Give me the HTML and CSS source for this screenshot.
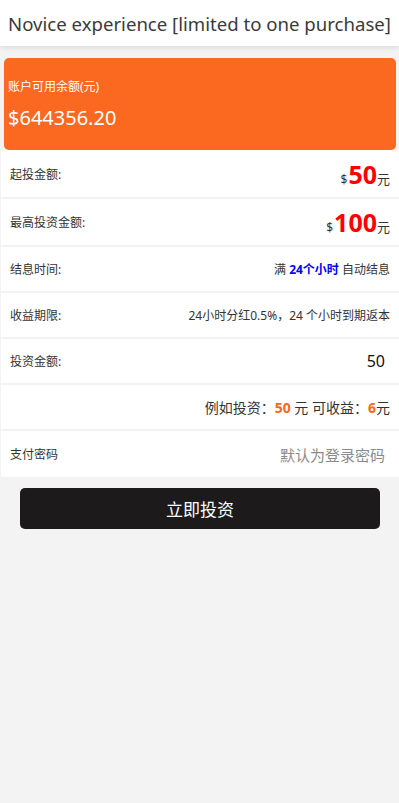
FILE: index.html
```html
<!DOCTYPE html>
<html lang="zh">
<head>
<meta charset="utf-8">
<link rel="stylesheet" href="styles.css">
</head>
<body>
<header class="topbar">
  <h1 class="title">Novice experience [limited to one purchase]</h1>
</header>
<main class="page">
  <section class="balance">
    <div class="balance-label">账户可用余额(元)</div>
    <div class="balance-amount">$644356.20</div>
  </section>
  <div class="rows">
    <div class="row row-tall">
      <span class="label">起投金额:</span>
      <span class="value"><span class="cur">$</span><span class="big">50</span><span class="unit">元</span></span>
    </div>
    <div class="row row-mid">
      <span class="label">最高投资金额:</span>
      <span class="value"><span class="cur">$</span><span class="big">100</span><span class="unit">元</span></span>
    </div>
    <div class="row">
      <span class="label">结息时间:</span>
      <span class="value small">满 <b class="blue">24个小时</b> 自动结息</span>
    </div>
    <div class="row">
      <span class="label">收益期限:</span>
      <span class="value small">24小时分红0.5%，24 个小时到期返本</span>
    </div>
    <div class="row">
      <span class="label">投资金额:</span>
      <span class="value input-val">50</span>
    </div>
    <div class="row">
      <span class="label"></span>
      <span class="value example">例如投资：<b class="orange">50</b> 元 可收益：<b class="orange">6</b>元</span>
    </div>
    <div class="row row-last">
      <span class="label">支付密码</span>
      <span class="value placeholder">默认为登录密码</span>
    </div>
  </div>
  <div class="actions">
    <button class="submit" type="button">立即投资</button>
  </div>
</main>
</body>
</html>
```
FILE: styles.css
```css
html, body {
  margin: 0;
  padding: 0;
  background: #f3f3f3;
  font-family: "Noto Sans", "Noto Sans CJK SC", sans-serif;
  color: #333;
}
.topbar {
  height: 46px;
  background: #fff;
  box-shadow: 0 1px 6px rgba(0,0,0,0.12);
  display: flex;
  align-items: center;
  justify-content: center;
}
.title {
  margin: 0;
  font-size: 18.6px;
  font-weight: normal;
  color: #3a3a3a;
  white-space: nowrap;
}
.page {
  padding-top: 12px;
}
.balance {
  margin: 0 3px 0 4px;
  height: 92px;
  background: #fb6820;
  border-radius: 5px;
  color: #fff;
  display: flex;
  flex-direction: column;
  justify-content: center;
  padding-left: 4px;
  box-sizing: border-box;
}
.balance-label {
  font-size: 12px;
  line-height: 16px;
  margin-top: 2px;
}
.balance-amount {
  font-size: 20px;
  line-height: 26px;
  margin-top: 10px;
}
.rows {
  margin-left: 1px;
  background: #fff;
}
.row {
  height: 44px;
  border-bottom: 2px solid #f3f3f3;
  display: flex;
  align-items: center;
  justify-content: space-between;
  padding: 0 9px 0 9px;
  font-size: 12px;
}
.row-tall { height: 47px; }
.row-mid { height: 46px; }
.row-last { height: 46px; border-bottom: none; }
.label {
  color: #333;
  font-size: 12px;
}
.value {
  text-align: right;
}
.cur {
  font-size: 12px;
  color: #333;
}
.big {
  font-size: 25px;
  font-weight: bold;
  color: #ff0000;
  margin-left: 1px;
}
.unit {
  font-size: 13px;
  color: #333;
}
.small {
  font-size: 12px;
  color: #333;
}
.blue {
  color: #0000ff;
}
.input-val {
  font-size: 16px;
  color: #111;
  padding-right: 5px;
}
.example {
  font-size: 14px;
  color: #333;
}
.orange {
  color: #fb6820;
}
.placeholder {
  font-size: 15px;
  color: #8a8a8a;
  padding-right: 5px;
}
.actions {
  padding: 11px 19px 0 20px;
}
.submit {
  display: block;
  width: 100%;
  height: 41px;
  border: none;
  border-radius: 5px;
  background: #1c1a1a;
  color: #fff;
  font-family: "Noto Sans CJK SC", sans-serif;
  font-size: 17px;
}
```
